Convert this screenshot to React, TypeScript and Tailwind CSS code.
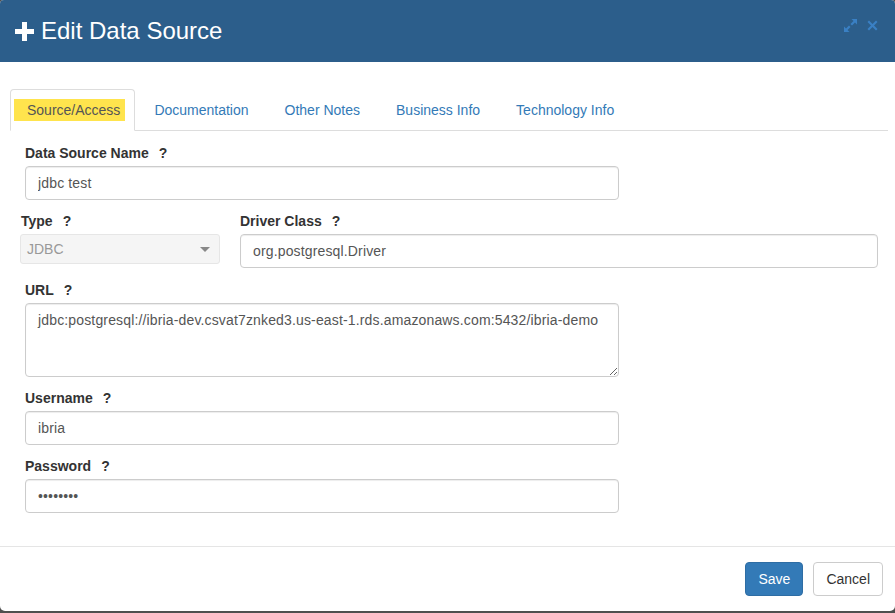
import { useState } from "react";

const tabs = ["Source/Access", "Documentation", "Other Notes", "Business Info", "Technology Info"];

const Label = ({ text, className = "" }: { text: string; className?: string }) => (
  <div className={`h-5 leading-5 mb-[3px] text-[14px] font-bold text-[#333] whitespace-nowrap ${className}`}>
    {text}
    <span className="ml-[10px]">?</span>
  </div>
);

const inputCls =
  "block w-full h-[34px] px-[12px] border border-[#ccc] rounded-[4px] text-[14px] tracking-[0.15px] text-[#555] bg-white outline-none shadow-[inset_0_1px_1px_rgba(0,0,0,0.075)]";

export default function App() {
  const [active] = useState(0);

  return (
    <div className="w-[895px] h-[613px] bg-[#4f4f4f] font-['Liberation_Sans',Arial,sans-serif]">
      <div className="h-[611px] bg-white rounded-t-[4px] rounded-b-[5px] overflow-hidden flex flex-col">
        {/* header */}
        <div className="h-[62px] shrink-0 bg-[#2c5e8b] flex items-center pl-[15px] pr-[17px]">
          <svg width="19" height="19" viewBox="0 0 19 19" className="mr-[7px] mt-[1px]">
            <path d="M7 0h5v7h7v5h-7v7H7v-7H0V7h7z" fill="#fff" />
          </svg>
          <h1 className="text-[24px] leading-none text-white">Edit Data Source</h1>
          <div className="ml-auto flex items-center gap-[10px] -mt-[11px]">
            <svg width="13" height="13" viewBox="0 0 13 13">
              <path d="M7.5 0H13v5.5l-2-2-3 3-1.5-1.5 3-3z" fill="#3a80c4" />
              <path d="M5.5 13H0V7.5l2 2 3-3 1.5 1.5-3 3z" fill="#3a80c4" />
            </svg>
            <svg width="11" height="11" viewBox="0 0 11 11">
              <path d="M2 0.5L5.5 4 9 0.5 10.5 2 7 5.5 10.5 9 9 10.5 5.5 7 2 10.5 0.5 9 4 5.5 0.5 2z" fill="#3a80c4" />
            </svg>
          </div>
        </div>

        {/* body */}
        <div className="flex-1 pt-[27px] pl-[10px] pr-[7px]">
          <ul className="flex border-b border-[#ddd]">
            {tabs.map((t, i) =>
              i === active ? (
                <li
                  key={t}
                  className="-mb-px h-[42px] mr-[2px] border border-[#ddd] border-b-transparent rounded-t-[4px] bg-white pt-[9px] pl-[3px] pr-[9px]"
                >
                  <span className="block h-[22px] leading-[22px] bg-[#ffe44d] pl-[13px] pr-[5px] text-[14px] text-[#555]">
                    {t}
                  </span>
                </li>
              ) : (
                <li
                  key={t}
                  className="-mb-px h-[42px] mr-[2px] border border-transparent px-[16px] flex items-center text-[14px] text-[#337ab7]"
                >
                  {t}
                </li>
              )
            )}
          </ul>

          <div className="pl-[15px]">
            <div className="w-[594px] mt-[12px]">
              <Label text="Data Source Name" />
              <input className={inputCls} defaultValue="jdbc test" readOnly />
            </div>

            <div className="flex mt-[11px] -ml-[5px]">
              <div className="w-[200px]">
                <Label text="Type" className="pl-[1px]" />
                <div className="h-[30px] bg-[#f5f5f5] border border-[#e6e6e6] rounded-[3px] flex items-center pl-[6px] pr-[9px] text-[14px] text-[#999]">
                  JDBC
                  <svg width="10" height="5" viewBox="0 0 10 5" className="ml-auto">
                    <path d="M0 0h10L5 5z" fill="#888" />
                  </svg>
                </div>
              </div>
              <div className="ml-[20px] w-[638px]">
                <Label text="Driver Class" />
                <input className={inputCls} defaultValue="org.postgresql.Driver" readOnly />
              </div>
            </div>

            <div className="w-[594px] mt-[12px]">
              <Label text="URL" />
              <textarea
                className="block w-full h-[74px] px-[12px] py-[6px] border border-[#ccc] rounded-[4px] text-[14px] tracking-[0.15px] leading-[20px] text-[#555] outline-none shadow-[inset_0_1px_1px_rgba(0,0,0,0.075)]"
                defaultValue="jdbc:postgresql://ibria-dev.csvat7znked3.us-east-1.rds.amazonaws.com:5432/ibria-demo"
                readOnly
              />
            </div>

            <div className="w-[594px] mt-[11px]">
              <Label text="Username" />
              <input className={inputCls} defaultValue="ibria" readOnly />
            </div>

            <div className="w-[594px] mt-[11px]">
              <Label text="Password" />
              <input className={inputCls} type="password" defaultValue="12345678" readOnly />
            </div>
          </div>
        </div>

        {/* footer */}
        <div className="h-[65px] shrink-0 border-t border-[#e5e5e5] flex items-center justify-end gap-[10px] pr-[12px]">
          <button className="h-[34px] px-[12px] rounded-[4px] bg-[#337ab7] border border-[#2e6da4] text-white text-[14px]">
            Save
          </button>
          <button className="h-[34px] px-[12px] rounded-[4px] bg-white border border-[#ccc] text-[#333] text-[14px]">
            Cancel
          </button>
        </div>
      </div>
    </div>
  );
}
